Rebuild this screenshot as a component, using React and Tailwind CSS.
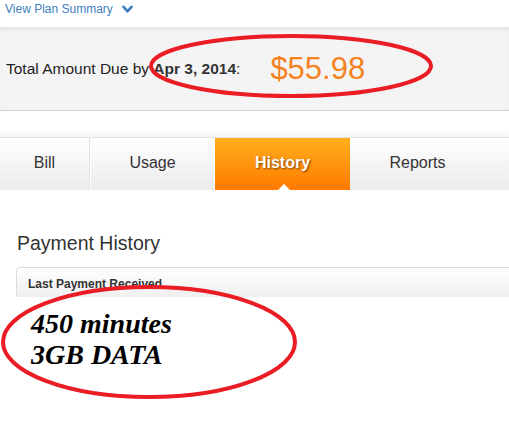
import React from "react";

export default function App() {
  return (
    <div className="relative w-[509px] h-[448px] overflow-hidden bg-white font-['Liberation_Sans',Arial,sans-serif]">
      {/* top link */}
      <div className="h-[27px] flex items-start pl-[5px] pt-[1px]">
        <span className="text-[12px] leading-[16px] text-[#3f7fbf]">View Plan Summary</span>
        <svg className="ml-[9px] mt-[4px]" width="11" height="9" viewBox="0 0 11 9">
          <path d="M1.5 1.8 L5.5 6.3 L9.5 1.8" fill="none" stroke="#3f7fbf" strokeWidth="2.6" strokeLinecap="round" strokeLinejoin="round" />
        </svg>
      </div>

      {/* total band */}
      <div className="h-[84px] bg-[#f5f4f5] border-b border-[#cfcfcf] shadow-[inset_0_4px_4px_-2px_rgba(0,0,0,0.08)] flex items-center pl-[6px]">
        <span className="text-[15.5px] text-[#222]">
          Total Amount Due by <b className="text-[#333]">Apr 3, 2014</b>:
        </span>
        <span className="ml-[30px] text-[31px] text-[#f58220] leading-none">$55.98</span>
      </div>

      {/* tabs */}
      <div className="mt-[26px] h-[53px] border-t border-[#e4e4e4] shadow-[0_-4px_5px_rgba(0,0,0,0.05)] flex">
        <div className="w-[90px] h-full pb-[3px] bg-gradient-to-b from-white to-[#ebebeb] flex items-center justify-center text-[16px] text-[#333] border-r border-[#e2e2e2]">
          Bill
        </div>
        <div className="w-[125px] h-full pb-[3px] bg-gradient-to-b from-white to-[#ebebeb] flex items-center justify-center text-[16px] text-[#333] border-l border-white border-r border-r-white">
          Usage
        </div>
        <div className="relative w-[135px] h-full pb-[3px] bg-gradient-to-b from-[#ffae1a] to-[#ff7a00] flex items-center justify-center text-[16px] font-bold text-white [text-shadow:1px_1px_2px_rgba(90,40,0,0.8)]">
          History
          <div className="absolute bottom-0 left-[63px] w-0 h-0 border-l-[6px] border-r-[6px] border-b-[6px] border-l-transparent border-r-transparent border-b-white" />
        </div>
        <div className="w-[135px] h-full pb-[3px] bg-gradient-to-b from-white to-[#ebebeb] flex items-center justify-center text-[16px] text-[#333]">
          Reports
        </div>
        <div className="flex-1 h-full bg-gradient-to-b from-white to-[#ebebeb]" />
      </div>

      {/* payment history */}
      <div className="pl-[17px] pt-[41px] text-[19.5px] text-[#333] leading-[24px]">Payment History</div>
      <div className="ml-[16px] mt-[12px] h-[30px] border-t border-l border-[#dcdcdc] rounded-tl-[4px] bg-gradient-to-b from-white to-[#efefef] flex items-start pl-[11px] pt-[9px]">
        <span className="text-[12px] font-bold text-[#333] leading-[14px]">Last Payment Received</span>
      </div>

      <div className="pl-[31px] pt-[11px] font-['Liberation_Serif','Times_New_Roman',serif] font-bold italic text-[28px] leading-[31px] text-black">
        <div>450 minutes</div>
        <div>3GB DATA</div>
      </div>

      {/* red annotation ellipses */}
      <svg className="absolute left-0 top-0 pointer-events-none" width="509" height="448">
        <ellipse cx="291" cy="66" rx="140" ry="30" fill="none" stroke="#ea1c24" strokeWidth="4" />
        <ellipse cx="149" cy="342" rx="146" ry="55" fill="none" stroke="#ea1c24" strokeWidth="4" />
      </svg>
    </div>
  );
}
